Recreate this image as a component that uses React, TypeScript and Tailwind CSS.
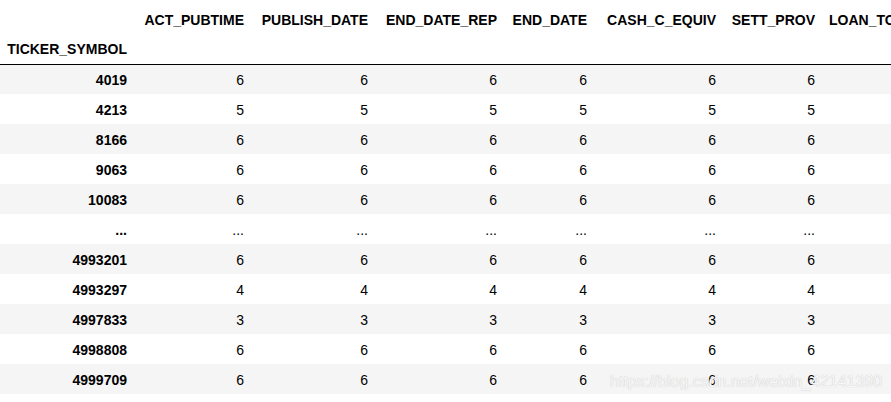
const columns = [
  { name: 'ACT_PUBTIME', width: 'w-[117px]' },
  { name: 'PUBLISH_DATE', width: 'w-[124px]' },
  { name: 'END_DATE_REP', width: 'w-[129px]' },
  { name: 'END_DATE', width: 'w-[90px]' },
  { name: 'CASH_C_EQUIV', width: 'w-[129px]' },
  { name: 'SETT_PROV', width: 'w-[99px]' },
  { name: 'LOAN_TO_OTH_BANK_FI', width: 'w-[171px]' },
];

const rows: [string, string][] = [
  ['4019', '6'],
  ['4213', '5'],
  ['8166', '6'],
  ['9063', '6'],
  ['10083', '6'],
  ['...', '...'],
  ['4993201', '6'],
  ['4993297', '4'],
  ['4997833', '3'],
  ['4998808', '6'],
  ['4999709', '6'],
];

export default function App() {
  return (
    <div className="relative w-[891px] h-[402px] overflow-hidden bg-white pt-[5px] text-black text-[14px] font-['Liberation_Sans',Arial,sans-serif]">
      <table className="table-fixed border-collapse w-[993px]">
        <colgroup>
          <col className="w-[134px]" />
          {columns.map((c) => (
            <col key={c.name} className={c.width} />
          ))}
        </colgroup>
        <thead className="border-b border-black">
          <tr className="h-[30px]">
            <th className="px-[7px]" />
            {columns.map((c) => (
              <th key={c.name} className="px-[7px] text-right font-bold whitespace-nowrap">
                {c.name}
              </th>
            ))}
          </tr>
          <tr className="h-[29px]">
            <th className="px-[7px] text-right font-bold whitespace-nowrap">TICKER_SYMBOL</th>
            {columns.map((c) => (
              <th key={c.name} className="px-[7px]" />
            ))}
          </tr>
        </thead>
        <tbody>
          {rows.map(([ticker, value], i) => (
            <tr key={ticker} className={`h-[30px] ${i % 2 === 0 ? 'bg-[#f5f5f5]' : 'bg-white'}`}>
              <th className="px-[7px] pt-[2px] pb-0 text-right font-bold">{ticker}</th>
              {columns.map((c) => (
                <td key={c.name} className="px-[7px] pt-[2px] pb-0 text-right">
                  {value}
                </td>
              ))}
            </tr>
          ))}
        </tbody>
      </table>
      <div className="absolute left-[610px] top-[373px] text-[16px] leading-[18px] text-[#f7f7f7] [text-shadow:0_0_1px_#b8b8b8] whitespace-nowrap">
        https://blog.csdn.net/weixin_42141390
      </div>
    </div>
  );
}
